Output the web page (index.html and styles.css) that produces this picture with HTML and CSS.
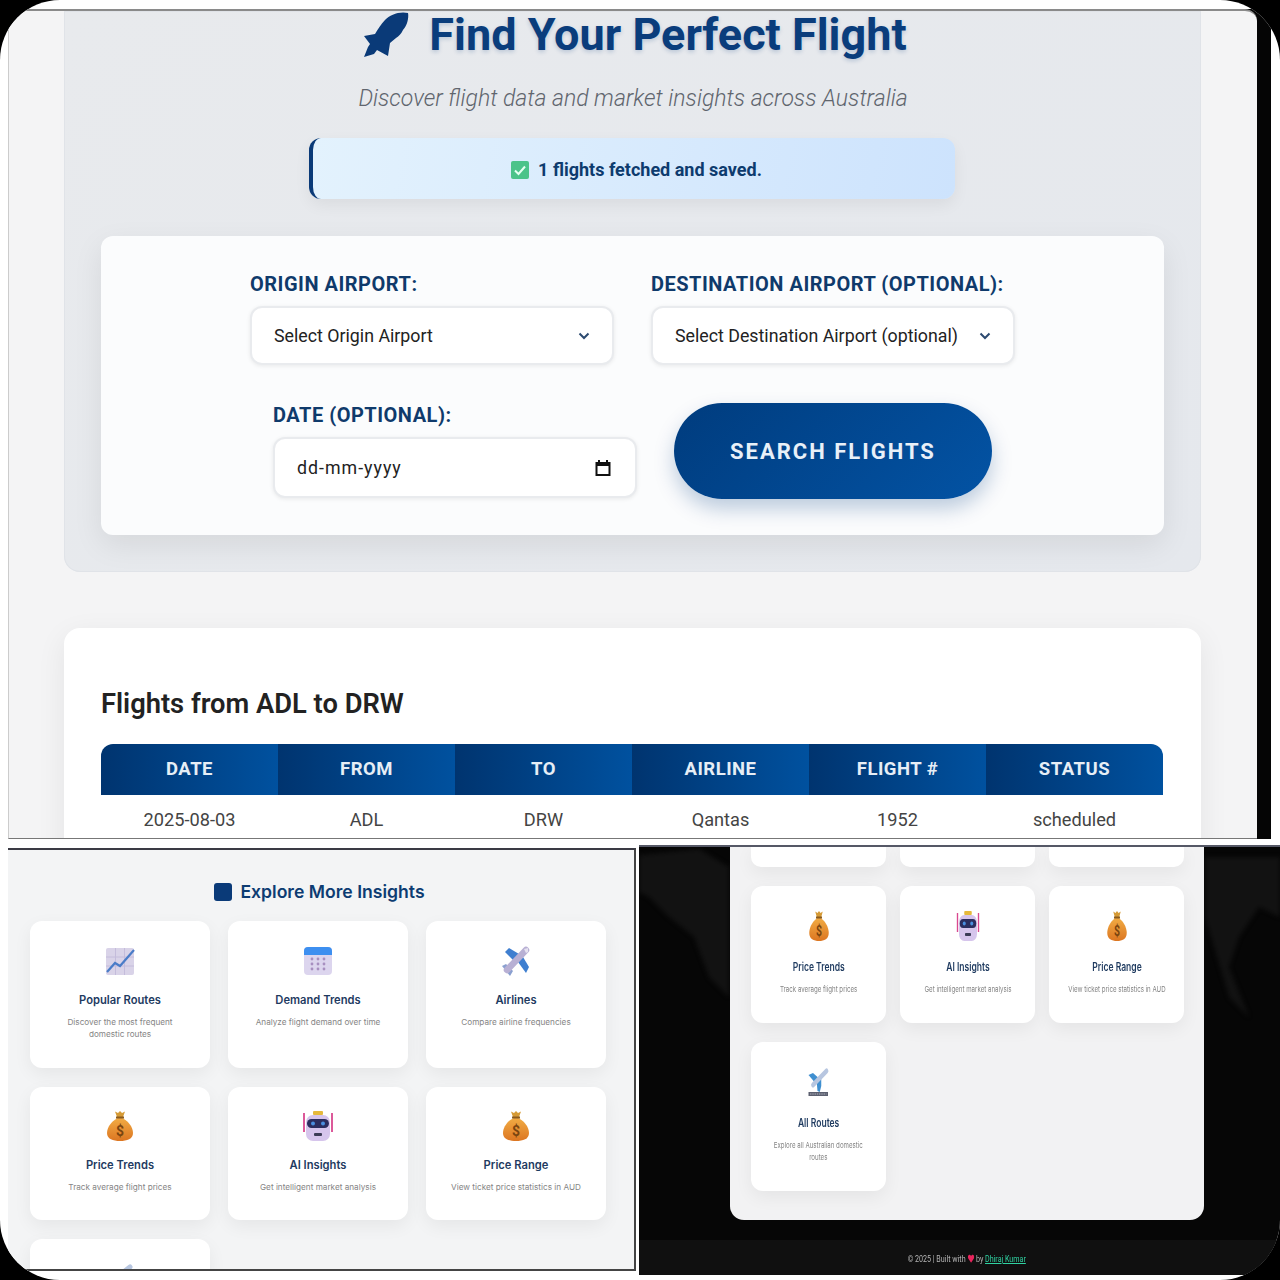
FILE: index.html
```html
<!DOCTYPE html>
<html>
<head>
	<meta charset="utf-8">
	<title>Find Your Perfect Flight</title>
	<link rel="stylesheet" href="styles.css">
</head>
<body>

	<!-- Emoji style icons, used by both insight panels -->
	<svg class="defs" width="0" height="0">
		<defs>
			<linearGradient id="bagFill" x1="0" y1="0" x2="0" y2="1">
				<stop offset="0" stop-color="#f2ae45"/>
				<stop offset="1" stop-color="#dc7622"/>
			</linearGradient>
		</defs>
		<symbol id="iconChart" viewBox="0 0 32 32">
			<rect x="2" y="3" width="28" height="27" rx="2" fill="#d9d3e8"/>
			<path d="M2 12H30M2 21H30M11.500 3V30M20.500 3V30" stroke="#c4bcdb" stroke-width="1" fill="none"/>
			<path d="M3 27L11 18L16 21L30 5" stroke="#4a7cc8" stroke-width="2.200" fill="none"/>
		</symbol>
		<symbol id="iconCalendar" viewBox="0 0 32 32">
			<rect x="2" y="2" width="28" height="28" rx="4" fill="#dcd5ee"/>
			<path d="M2 10V6a4 4 0 0 1 4-4H26a4 4 0 0 1 4 4V10Z" fill="#3d8ff0"/>
			<g fill="#a78fc0">
				<circle cx="10" cy="14" r="1.400"/><circle cx="16" cy="14" r="1.400"/><circle cx="22" cy="14" r="1.400"/>
				<circle cx="10" cy="19" r="1.400"/><circle cx="16" cy="19" r="1.400"/><circle cx="22" cy="19" r="1.400"/>
				<circle cx="10" cy="24" r="1.400"/><circle cx="16" cy="24" r="1.400"/><circle cx="22" cy="24" r="1.400"/>
			</g>
		</symbol>
		<symbol id="iconPlane" viewBox="0 0 32 32">
			<path d="M5 7L9 3L19 9L13 15Z" fill="#3f7fd0"/>
			<path d="M18 17L23 12L29 22L26 28Z" fill="#3f7fd0"/>
			<path d="M2 21L6 19L13 26L10 31Z" fill="#8aa0d0"/>
			<path d="M7 25L26 5" stroke="#b8b0d4" stroke-width="6.500" stroke-linecap="round"/>
			<path d="M24 4L28 3L28 7L26 8Z" fill="#e6e2f0"/>
		</symbol>
		<symbol id="iconBag" viewBox="0 0 32 32">
			<path d="M16 7C24 10 29 17 29 23C29 29 23 31 16 31C9 31 3 29 3 23C3 17 8 10 16 7Z" fill="url(#bagFill)"/>
			<path d="M11 1.500L14 3L16 1L18 3L21 1.500L19 7H13Z" fill="#d59a35"/>
			<rect x="12" y="6.500" width="8" height="2" fill="#8a5a1e"/>
		</symbol>
		<symbol id="iconRobot" viewBox="0 0 32 32">
			<path d="M2 3V22M30 3V22" stroke="#d9488f" stroke-width="1.800"/>
			<rect x="11" y="1" width="10" height="4" rx="1" fill="#e6b93c"/>
			<rect x="4" y="5" width="24" height="26" rx="7" fill="#d6c5ec"/>
			<rect x="5" y="9" width="22" height="9" rx="4.500" fill="#2b2d5e"/>
			<circle cx="11" cy="13.500" r="2" fill="#4a8fe0"/>
			<circle cx="21" cy="13.500" r="2" fill="#4a8fe0"/>
			<rect x="12" y="23" width="8" height="3" rx="1" fill="#3b3b55"/>
		</symbol>
		<symbol id="iconRoutes" viewBox="0 0 32 32">
			<path d="M2 9L8 7L17 13L11 17Z" fill="#3f8fd0"/>
			<path d="M13 17L19 13L19 20L17 26L14 25Z" fill="#3f8fd0"/>
			<path d="M8 19L26 5" stroke="#b7c6e0" stroke-width="5" stroke-linecap="round"/>
			<rect x="2" y="26" width="26" height="4" fill="#5c6070"/>
			<path d="M4 28H26" stroke="#b9bcc6" stroke-width="1" stroke-dasharray="2 1"/>
		</symbol>
	</svg>

	<div class="frame">

		<div class="backStrip"></div>

		<!-- Top screenshot: search form and results -->
		<section class="shot shotSearch">
			<div class="hero">
				<h1 class="heroTitle">
					<svg class="rocket" viewBox="0 0 46 45"><path d="M45 1C46 6 44 14 40 18C38 22 36 24 33 26L27 31L25 44L14 38L11 42L1 45L5 35L7 32L1 24L12 22C15 17 18 12 22 8C27 3 36 -1 45 1Z"/></svg>
					<span class="heroText">Find Your Perfect Flight</span>
				</h1>
				<p class="heroSub">Discover flight data and market insights across Australia</p>

				<div class="alert">
					<svg class="check" viewBox="0 0 20 20">
						<rect x="1" y="1" width="18" height="18" rx="2" fill="#4cc38a"/>
						<path d="M5 10.500L8.500 14L15 6.500" stroke="#e6fff2" stroke-width="2" fill="none"/>
					</svg>
					<span class="alertText">1 flights fetched and saved.</span>
				</div>

				<form class="searchForm" action="">
					<div class="group">
						<div class="label">ORIGIN AIRPORT:</div>
						<div class="field">
							<span>Select Origin Airport</span>
							<svg class="chevron" viewBox="0 0 12 8"><path d="M1.500 1.500L6 6L10.500 1.500"/></svg>
						</div>
					</div>
					<div class="group">
						<div class="label">DESTINATION AIRPORT (OPTIONAL):</div>
						<div class="field">
							<span>Select Destination Airport (optional)</span>
							<svg class="chevron" viewBox="0 0 12 8"><path d="M1.500 1.500L6 6L10.500 1.500"/></svg>
						</div>
					</div>
					<div class="group">
						<div class="label">DATE (OPTIONAL):</div>
						<div class="field fieldDate">
							<span class="dateText">dd-mm-yyyy</span>
							<svg class="calendar" viewBox="0 0 16 16"><path d="M3 0H5V2H11V0H13V2H15.500V16H.500V2H3ZM2.500 6V14H13.500V6Z"/></svg>
						</div>
					</div>
					<button class="searchBtn" type="button">SEARCH FLIGHTS</button>
				</form>
			</div>

			<div class="results">
				<h2 class="resultsTitle">Flights from ADL to DRW</h2>
				<table class="flights">
					<thead>
						<tr><th>DATE</th><th>FROM</th><th>TO</th><th>AIRLINE</th><th>FLIGHT #</th><th>STATUS</th></tr>
					</thead>
					<tbody>
						<tr><td>2025-08-03</td><td>ADL</td><td>DRW</td><td>Qantas</td><td>1952</td><td>scheduled</td></tr>
					</tbody>
				</table>
			</div>
		</section>

		<!-- Bottom left screenshot: insight cards -->
		<section class="shot shotInsights">
			<div class="insights">
				<h3 class="insightsTitle"><span class="titleSquare"></span>Explore More Insights</h3>
				<div class="cardGrid lightGrid">
					<a class="card">
						<svg class="cardIcon"><use href="#iconChart"/></svg>
						<h4 class="cardTitle">Popular Routes</h4>
						<p class="cardText">Discover the most frequent<br>domestic routes</p>
					</a>
					<a class="card">
						<svg class="cardIcon"><use href="#iconCalendar"/></svg>
						<h4 class="cardTitle">Demand Trends</h4>
						<p class="cardText">Analyze flight demand over time</p>
					</a>
					<a class="card">
						<svg class="cardIcon"><use href="#iconPlane"/></svg>
						<h4 class="cardTitle">Airlines</h4>
						<p class="cardText">Compare airline frequencies</p>
					</a>
					<a class="card">
						<svg class="cardIcon" viewBox="0 0 32 32"><use href="#iconBag"/><text x="16" y="26" class="bagSign">$</text></svg>
						<h4 class="cardTitle">Price Trends</h4>
						<p class="cardText">Track average flight prices</p>
					</a>
					<a class="card">
						<svg class="cardIcon"><use href="#iconRobot"/></svg>
						<h4 class="cardTitle">AI Insights</h4>
						<p class="cardText">Get intelligent market analysis</p>
					</a>
					<a class="card">
						<svg class="cardIcon" viewBox="0 0 32 32"><use href="#iconBag"/><text x="16" y="26" class="bagSign">$</text></svg>
						<h4 class="cardTitle">Price Range</h4>
						<p class="cardText">View ticket price statistics in AUD</p>
					</a>
					<a class="card">
						<svg class="cardIcon"><use href="#iconRoutes"/></svg>
					</a>
				</div>
			</div>
		</section>

		<!-- Bottom right screenshot: the same cards, squeezed, on the dark page -->
		<section class="shot shotDark">
			<svg class="worldMap" viewBox="0 0 641 395" preserveAspectRatio="none">
				<path d="M0 8L60 2L90 20V150L70 130L55 90L30 70L10 50L0 45Z"/>
				<path d="M566 10H641V70L620 60L600 90L590 120L610 170L590 150L575 100L566 70Z"/>
			</svg>
			<div class="darkMain">
				<div class="cardGrid darkGrid">
					<div class="card stub"></div>
					<div class="card stub"></div>
					<div class="card stub"></div>
					<a class="card">
						<svg class="cardIcon" viewBox="0 0 32 32"><use href="#iconBag"/><text x="16" y="26" class="bagSign">$</text></svg>
						<h4 class="cardTitle">Price Trends</h4>
						<p class="cardText">Track average flight prices</p>
					</a>
					<a class="card">
						<svg class="cardIcon"><use href="#iconRobot"/></svg>
						<h4 class="cardTitle">AI Insights</h4>
						<p class="cardText">Get intelligent market analysis</p>
					</a>
					<a class="card">
						<svg class="cardIcon" viewBox="0 0 32 32"><use href="#iconBag"/><text x="16" y="26" class="bagSign">$</text></svg>
						<h4 class="cardTitle">Price Range</h4>
						<p class="cardText">View ticket price statistics in AUD</p>
					</a>
					<a class="card">
						<svg class="cardIcon"><use href="#iconRoutes"/></svg>
						<h4 class="cardTitle">All Routes</h4>
						<p class="cardText">Explore all Australian domestic<br>routes</p>
					</a>
				</div>
			</div>
			<footer class="darkFooter">
				<span class="footerText">© 2025 | Built with
					<svg class="heart" viewBox="0 0 12 12"><path d="M6 11.500L1 6C-.500 3.500 1 1 3.200 1C4.500 1 5.500 1.800 6 2.800C6.500 1.800 7.500 1 8.800 1C11 1 12.500 3.500 11 6Z"/></svg>
					by <a class="footerLink">Dhiraj Kumar</a></span>
			</footer>
		</section>

	</div>
</body>
</html>
```

FILE: styles.css
```css
body {
	margin: 0;
	background-color: #000;
	font-family: "Roboto", "Liberation Sans", sans-serif;
}

.defs {
	position: absolute;
}

.bagSign {
	font-family: "Roboto", sans-serif;
	font-size: 14px;
	font-weight: 700;
	fill: #7a4510;
	text-anchor: middle;
}

.frame {
	position: relative;
	width: 1280px;
	height: 1280px;
	background-color: #fff;
	border-radius: 60px;
	overflow: hidden;
}

.backStrip {
	position: absolute;
	left: 1230px;
	top: 9px;
	width: 41px;
	height: 830px;
	background-color: #050505;
}

.shot {
	position: absolute;
	box-sizing: border-box;
	overflow: hidden;
}

/* Top screenshot */

.shotSearch {
	left: 8px;
	top: 9px;
	width: 1249px;
	height: 830px;
	padding: 0 56px 0 55px;
	background-color: #f4f4f5;
	border-top: 2px solid #8a8a8a;
	border-bottom: 1px solid #777;
	border-left: 1px solid #ccc;
	border-top-right-radius: 12px;
}

.hero {
	height: 561px;
	box-sizing: border-box;
	padding: 0 37px;
	background: linear-gradient(135deg, #e8eaed, #e5e8ed);
	border-radius: 0 0 16px 16px;
	box-shadow: inset 0 0 0 1px #e0e3e8;
}

.heroTitle {
	display: flex;
	justify-content: center;
	align-items: center;
	gap: 20px;
	height: 47px;
	margin: 0;
	padding-left: 5px;
}

.rocket {
	width: 46px;
	height: 45px;
	fill: #0a3a78;
}

.heroText {
	font-size: 45px;
	font-weight: 700;
	color: #0a3d7c;
	text-shadow: 0 2px 4px rgba(10, 61, 124, .2);
}

.heroSub {
	margin: 26px 0 24px;
	padding-left: 1px;
	font-size: 23px;
	line-height: 30px;
	font-weight: 300;
	font-style: italic;
	color: #60656d;
	text-align: center;
}

.alert {
	display: flex;
	justify-content: center;
	align-items: center;
	gap: 8px;
	box-sizing: border-box;
	width: 646px;
	height: 61px;
	margin: 0 0 37px 208px;
	padding: 2px 0 0 4px;
	background: linear-gradient(100deg, #e3f2fd, #cde3fd);
	border-left: 4px solid #0a3a78;
	border-radius: 12px;
	box-shadow: 0 6px 16px rgba(0, 0, 0, .06);
}

.check {
	width: 20px;
	height: 20px;
}

.alertText {
	font-size: 18px;
	font-weight: 700;
	color: #0d3b6e;
}

.searchForm {
	display: flex;
	flex-wrap: wrap;
	justify-content: center;
	align-items: center;
	gap: 38px 37px;
	height: 299px;
	box-sizing: border-box;
	padding: 37px 100px 36px;
	background-color: #fbfcfd;
	border-radius: 12px;
	box-shadow: 0 10px 30px rgba(0, 0, 0, .08);
}

.group {
	width: 364px;
}

.label {
	margin-bottom: 11px;
	font-size: 20px;
	line-height: 22px;
	font-weight: 700;
	letter-spacing: .5px;
	color: #0f3a6b;
	white-space: nowrap;
}

.field {
	display: flex;
	justify-content: space-between;
	align-items: center;
	box-sizing: border-box;
	height: 59px;
	padding: 0 22px;
	background-color: #fff;
	border: 2px solid #e9ebee;
	border-radius: 12px;
	box-shadow: 0 1px 4px rgba(0, 0, 0, .08);
	font-size: 17.800px;
	color: #222;
}

.fieldDate {
	height: 61px;
	padding-right: 24px;
}

.dateText {
	letter-spacing: 1px;
}

.chevron {
	width: 12px;
	height: 8px;
	fill: none;
	stroke: #2c4a70;
	stroke-width: 2;
}

.calendar {
	width: 16px;
	height: 16px;
	fill: #111;
}

.searchBtn {
	width: 318px;
	height: 96px;
	background: linear-gradient(135deg, #003c7e, #0353a4);
	border: none;
	border-radius: 48px;
	font-family: inherit;
	font-size: 22px;
	font-weight: 700;
	letter-spacing: 2px;
	color: #e8f0f8;
	box-shadow: 0 10px 20px rgba(0, 60, 126, .25);
}

.results {
	height: 300px;
	box-sizing: border-box;
	margin-top: 56px;
	padding: 60px 37px 0;
	background-color: #fff;
	border-radius: 16px 16px 0 0;
	box-shadow: 0 8px 30px rgba(0, 0, 0, .07);
}

.resultsTitle {
	margin: 0 0 24px;
	font-size: 27.300px;
	line-height: 32px;
	font-weight: 600;
	color: #222;
}

.flights {
	width: 1062px;
	border-collapse: collapse;
	table-layout: fixed;
}

.flights th {
	box-sizing: border-box;
	height: 51px;
	padding: 0 0 2px;
	background: linear-gradient(90deg, #00346f, #00519f);
	font-size: 18.500px;
	font-weight: 700;
	letter-spacing: .5px;
	color: #e6eef6;
}

.flights th:first-child {
	border-top-left-radius: 12px;
}

.flights th:last-child {
	border-top-right-radius: 12px;
}

.flights td {
	height: 48px;
	padding: 0;
	font-size: 18.200px;
	color: #444;
	text-align: center;
}

/* Bottom left screenshot */

.shotInsights {
	left: 8px;
	top: 848px;
	width: 628px;
	height: 423px;
	background-color: #f3f4f5;
	border-top: 2px solid #3a3a44;
	border-right: 2px solid #444;
	border-bottom: 2px solid #444;
}

.insights {
	width: 576px;
	margin-left: 22px;
	padding-top: 30px;
}

.insightsTitle {
	display: flex;
	justify-content: center;
	align-items: center;
	gap: 8px;
	height: 23px;
	margin: 0 0 18px;
	padding-left: 3px;
	font-family: "Inter", sans-serif;
	font-size: 17.600px;
	font-weight: 600;
	color: #0d3c72;
}

.titleSquare {
	width: 18px;
	height: 18px;
	background-color: #0a3a78;
	border-radius: 3px;
}

.cardGrid {
	display: grid;
	grid-template-columns: repeat(3, 180px);
	gap: 20px 18px;
	align-items: start;
}

.lightGrid {
	grid-template-rows: 147px 133px 133px;
	gap: 19px 18px;
}

.lightGrid .card:nth-child(n+4) {
	padding-top: 23px;
}

.card {
	display: flex;
	flex-direction: column;
	align-items: center;
	box-sizing: border-box;
	height: 100%;
	padding: 24px 8px 27px;
	background-color: #fff;
	border-radius: 12px;
	box-shadow: 0 6px 18px rgba(0, 0, 0, .06);
	text-align: center;
}

.cardIcon {
	width: 32px;
	height: 32px;
}

.cardTitle {
	margin: 15px 0 8px;
	font-family: "Inter", sans-serif;
	font-size: 11.200px;
	line-height: 16px;
	font-weight: 600;
	color: #1e3a5f;
	white-space: nowrap;
}

.cardText {
	margin: 0;
	font-family: "Inter", sans-serif;
	font-size: 8.200px;
	line-height: 12px;
	color: #858585;
	white-space: nowrap;
}

/* Bottom right screenshot */

.shotDark {
	display: flex;
	flex-direction: column;
	left: 639px;
	top: 845px;
	width: 641px;
	height: 430px;
	background-color: #060606;
	border-top: 2px solid #555866;
}

.worldMap {
	position: absolute;
	left: 0;
	top: 0;
	width: 641px;
	height: 395px;
	fill: #121212;
	filter: blur(2px);
}

.darkMain {
	position: relative;
	box-sizing: border-box;
	width: 474px;
	height: 373px;
	margin-left: 91px;
	padding: 0 21px;
	background-color: #f2f2f3;
	border-radius: 0 0 14px 14px;
}

.darkGrid {
	grid-template-columns: repeat(3, 135px);
	grid-template-rows: 20px 137px 149px;
	gap: 19px 14px;
}

.darkGrid .card > * {
	transform: scaleX(.75);
}

.darkGrid .cardTitle {
	margin: 17px 0 8px;
	font-size: 11.400px;
}

.stub {
	padding: 0;
	border-radius: 0 0 10px 10px;
}

.darkFooter {
	position: relative;
	display: flex;
	justify-content: center;
	align-items: center;
	height: 35px;
	padding-top: 2px;
	box-sizing: border-box;
	margin-top: 20px;
	background-color: #101010;
}

.footerText {
	font-size: 9.500px;
	color: #b5b5b5;
	white-space: nowrap;
	transform: scaleX(.75);
	margin-left: 15px;
}

.heart {
	width: 9px;
	height: 9px;
	fill: #e8255c;
	vertical-align: -1px;
}

.footerLink {
	color: #2fd3a2;
	text-decoration: underline;
}
```
